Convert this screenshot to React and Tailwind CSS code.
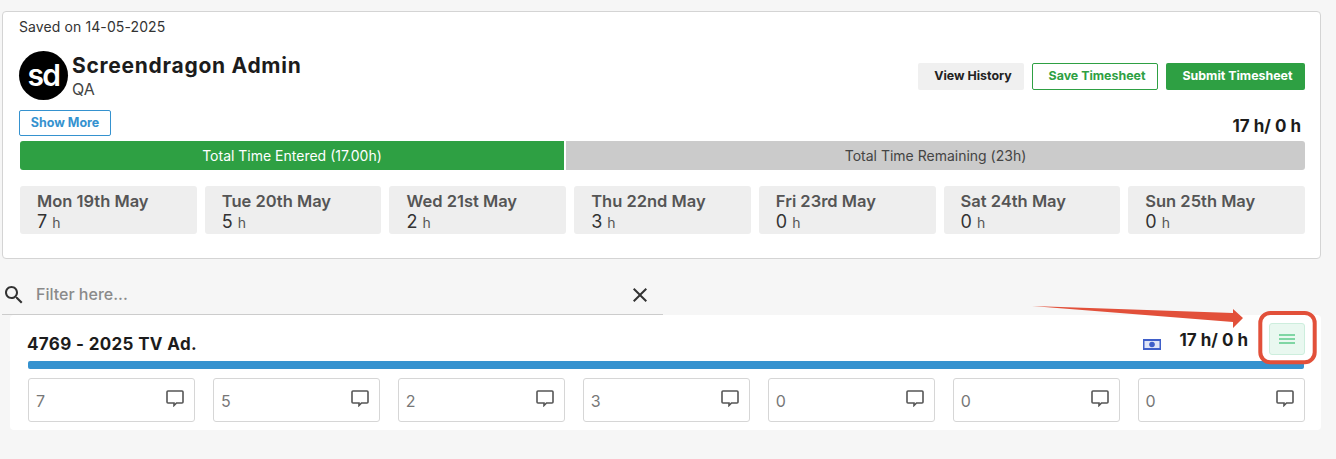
const days = [
    { label: 'Mon 19th May', hours: 7 },
    { label: 'Tue 20th May', hours: 5 },
    { label: 'Wed 21st May', hours: 2 },
    { label: 'Thu 22nd May', hours: 3 },
    { label: 'Fri 23rd May', hours: 0 },
    { label: 'Sat 24th May', hours: 0 },
    { label: 'Sun 25th May', hours: 0 },
];

export default function App() {
    return (
        <div className="relative h-[459px] w-[1336px] overflow-hidden bg-[#f6f6f6] pl-[2px] pt-[11px] font-['Inter',sans-serif] text-[#222]">
            {/* Summary card */}
            <div className="h-[248px] w-[1319px] rounded-[4px] border border-[#d4d4d4] bg-white pl-[16px] pr-[15px]">
                <div className="pt-[7px] text-[14px] leading-[16px] tracking-[0.1px] text-[#333]">Saved on 14-05-2025</div>

                <div className="mt-[16px] flex h-[49px] items-start">
                    <div className="flex h-[49px] w-[49px] items-center justify-center rounded-full bg-black pb-[2px] text-[30px] font-semibold leading-none tracking-[-1.5px] text-white">
                        sd
                    </div>
                    <div className="ml-[4px] flex-1">
                        <div className="mt-[2px] text-[21px] font-bold leading-[26px] tracking-[0.72px] text-[#1c1c1c]">Screendragon Admin</div>
                        <div className="text-[16px] leading-[20px] text-[#444]">QA</div>
                    </div>
                    <div className="mt-[12px] flex gap-[8px] text-[12.4px] font-bold">
                        <button className="h-[27px] w-[106px] rounded-[2px] bg-[#f0f0f0] pb-[1px] pl-[4px] text-[#222]">View History</button>
                        <button className="h-[27px] w-[126px] rounded-[2px] border border-[#2ea043] bg-white pb-[1px] pl-[4px] text-[#2ea043]">Save Timesheet</button>
                        <button className="h-[27px] w-[139px] rounded-[2px] bg-[#2ea043] pb-[1px] pl-[4px] text-white">Submit Timesheet</button>
                    </div>
                </div>

                <div className="mt-[10px] flex h-[26px] items-start justify-between">
                    <button className="h-[26px] w-[92px] rounded-[2px] border border-[#3592cf] text-[12.5px] font-bold text-[#3592cf]">Show More</button>
                    <div className="mr-[4px] mt-[7px] text-[17px] font-bold leading-[18px] text-[#1c1c1c]">17 h/ 0 h</div>
                </div>

                <div className="ml-[1px] mt-[5px] flex h-[29px] overflow-hidden rounded-[3px] text-[14px] leading-[30px]">
                    <div className="w-[544px] bg-[#2ea043] text-center text-white">Total Time Entered (17.00h)</div>
                    <div className="w-[2px] bg-white"></div>
                    <div className="flex-1 bg-[#cbcbcb] text-center text-[#444]">Total Time Remaining (23h)</div>
                </div>

                <div className="ml-[1px] mt-[16px] grid grid-cols-7 gap-[8px]">
                    {days.map((day) => (
                        <div key={day.label} className="h-[48px] rounded-[3px] bg-[#eeeeee] pl-[17px] pt-[5px]">
                            <div className="text-[16.5px] font-semibold leading-[20px] text-[#555]">{day.label}</div>
                            <div className="pt-[1px] text-[18px] leading-[20px] text-[#333]">
                                {day.hours} <span className="text-[14px] text-[#555]">h</span>
                            </div>
                        </div>
                    ))}
                </div>
            </div>

            {/* Filter */}
            <div className="mt-[21px] flex h-[35px] w-[661px] items-center border-b border-[#cccccc] pb-[4px]">
                <svg className="h-[24px] w-[24px]" viewBox="0 0 24 24" fill="#333">
                    <path d="M15.5 14h-.79l-.28-.27C15.41 12.59 16 11.11 16 9.5 16 5.91 13.09 3 9.5 3S3 5.91 3 9.5 5.91 16 9.5 16c1.61 0 3.09-.59 4.23-1.57l.27.28v.79l5 4.99L20.49 19l-4.99-5zm-6 0C7.01 14 5 11.99 5 9.5S7.01 5 9.5 5 14 7.01 14 9.5 11.99 14 9.5 14z" />
                </svg>
                <div className="mb-[2px] ml-[10px] flex-1 text-[16px] font-medium leading-[24px] text-[#8a8a8a]">Filter here...</div>
                <svg className="mr-[11px] h-[24px] w-[24px]" viewBox="0 0 24 24" fill="#333">
                    <path d="M19 6.41L17.59 5 12 10.59 6.41 5 5 6.41 10.59 12 5 17.59 6.41 19 12 13.41 17.59 19 19 17.59 13.41 12z" />
                </svg>
            </div>

            {/* Project row */}
            <div className="ml-[8px] h-[115px] w-[1311px] rounded-[4px] bg-white pl-[18px] pr-[16px]">
                <div className="flex h-[46px] items-start">
                    <div className="-ml-[1px] mt-[18px] flex-1 text-[17px] font-bold leading-[22px] tracking-[0.35px] text-[#1c1c1c]">4769 - 2025 TV Ad.</div>
                    <svg className="mt-[24px] h-[11px] w-[18px]" viewBox="0 0 18 11">
                        <rect width="18" height="11" fill="#3f5fc9" />
                        <rect x="1.5" y="2" width="15" height="7" fill="#dfe5f7" />
                        <circle cx="9" cy="5.5" r="2.8" fill="#3f5fc9" />
                    </svg>
                    <div className="ml-[18px] mt-[14px] text-[17px] font-bold leading-[22px] text-[#1c1c1c]">17 h/ 0 h</div>
                    <button className="ml-[21px] mt-[8px] flex h-[32px] w-[36px] items-center justify-center rounded-[3px] border border-[#cdeedd] bg-[#e9f8f0]">
                        <svg className="h-[12px] w-[16px]" viewBox="0 0 16 12" fill="#7fd6a4">
                            <rect y="1" width="16" height="2" />
                            <rect y="5" width="16" height="2" />
                            <rect y="9" width="16" height="2" />
                        </svg>
                    </button>
                </div>
                <div className="h-[8px] w-[1276px] rounded-[2px] bg-[#3592cf]"></div>
                <div className="mt-[9px] grid w-[1277px] grid-cols-7 gap-[17.5px]">
                    {days.map((day) => (
                        <div key={day.label} className="relative h-[44px] rounded-[3px] border border-[#d6d6d6] bg-white pl-[7px] pt-[12px] text-[16px] leading-[20px] text-[#777]">
                            {day.hours}
                            <svg className="absolute right-[10px] top-[11px] h-[17px] w-[18px]" viewBox="0 0 18 17" fill="none" stroke="#555" strokeWidth="1.6">
                                <path d="M2 1h14a1 1 0 0 1 1 1v10a1 1 0 0 1-1 1h-5.5l-2.5 2.5V13H2a1 1 0 0 1-1-1V2a1 1 0 0 1 1-1z" />
                            </svg>
                        </div>
                    ))}
                </div>
            </div>

            {/* Annotation drawn over the screenshot */}
            <svg className="pointer-events-none absolute left-0 top-0" width="1336" height="459">
                <polygon points="1032,306 1233,313 1233,309 1243,318 1233,328 1233,322" fill="#e2503a" />
                <rect x="1260.3" y="313" width="54.4" height="49.3" rx="10" fill="none" stroke="#e2503a" strokeWidth="4" />
            </svg>
        </div>
    );
}
